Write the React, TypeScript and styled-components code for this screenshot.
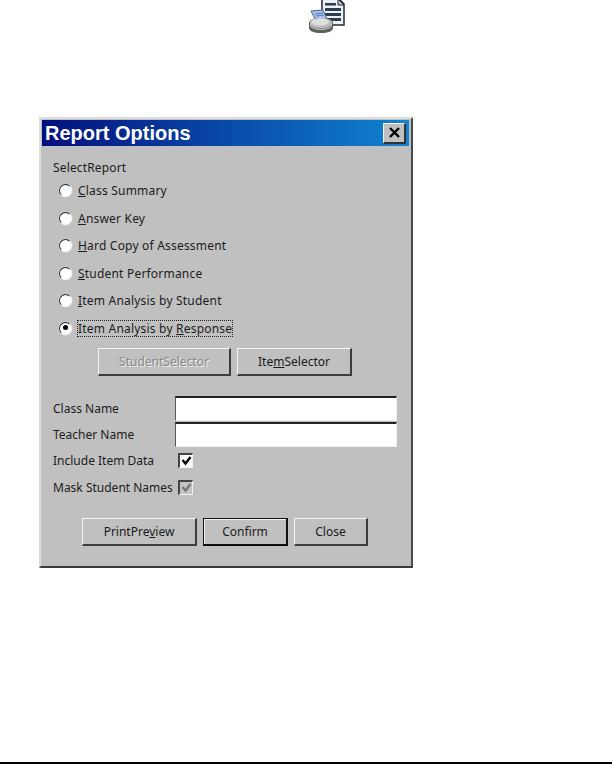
import * as React from "react";
import styled, { createGlobalStyle } from "styled-components";

const GlobalStyle = createGlobalStyle`
  html, body {
    margin: 0;
    padding: 0;
    background: #fff;
  }
`;

const Page = styled.div`
  position: relative;
  height: 764px;
  box-sizing: border-box;
  display: flex;
  flex-direction: column;
  border-bottom: 2px solid #000;
  font-family: "Noto Sans", "DejaVu Sans", sans-serif;
  font-size: 12px;
  color: #1c1c1c;
`;

const IconRow = styled.div`
  height: 34px;
  padding-left: 308px;
  margin-bottom: 83px;
`;

const Window = styled.div`
  width: 374px;
  height: 451px;
  margin-left: 39px;
  box-sizing: border-box;
  background: #c0c0c0;
  border-style: solid;
  border-width: 2px;
  border-color: #dcdcdc #4a4a4a #3a3a3a #dcdcdc;
  padding: 1px 2px 0 1px;
`;

const TitleBar = styled.div`
  height: 26px;
  display: flex;
  align-items: center;
  justify-content: space-between;
  padding: 0 3px 0 3px;
  background: linear-gradient(90deg, #03107e 0%, #0a55b0 60%, #1084d0 100%);
`;

const Title = styled.span`
  font-family: "Liberation Sans", Arial, sans-serif;
  font-size: 20px;
  font-weight: 700;
  color: #fff;
`;

const CloseBox = styled.div`
  width: 23px;
  height: 21px;
  box-sizing: border-box;
  display: flex;
  align-items: center;
  justify-content: center;
  background: #c0c0c0;
  border-style: solid;
  border-width: 1px 2px 2px 1px;
  border-color: #f4f4f4 #333 #333 #f4f4f4;
`;

const Body = styled.div`
  padding: 14px 0 0 11px;
`;

const GroupLabel = styled.div`
  line-height: 16px;
  margin-bottom: 6.5px;
  letter-spacing: 0.15px;
`;

const RadioRow = styled.div`
  height: 16px;
  margin-bottom: 11.6px;
  padding-left: 6px;
  display: flex;
  align-items: center;
  gap: 6px;
`;

const RadioCircle = styled.span<{ $checked?: boolean }>`
  position: relative;
  width: 13px;
  height: 13px;
  box-sizing: border-box;
  flex: none;
  border-radius: 50%;
  background: #fff;
  border: 1.5px solid;
  border-color: #222 #f4f4f4 #f4f4f4 #222;
  box-shadow: 0 0 0 0.5px #ddd;

  &::after {
    content: "";
    display: ${(p) => (p.$checked ? "block" : "none")};
    position: absolute;
    left: 2.5px;
    top: 2.5px;
    width: 5px;
    height: 5px;
    border-radius: 50%;
    background: #000;
  }
`;

const RadioText = styled.span<{ $focused?: boolean }>`
  line-height: 15px;
  letter-spacing: 0.2px;
  outline: ${(p) => (p.$focused ? "1px dotted #222" : "none")};
`;

const SelectorRow = styled.div`
  display: flex;
  gap: 6px;
  margin: 0 0 20px 45px;
`;

const Button = styled.div<{ $w: number; $disabled?: boolean; $default?: boolean }>`
  width: ${(p) => p.$w}px;
  height: 28px;
  box-sizing: border-box;
  display: flex;
  align-items: center;
  justify-content: center;
  background: #c0c0c0;
  border-style: solid;
  border-width: 1px 2px 2px 1px;
  border-color: ${(p) =>
    p.$default ? "#111" : "#f4f4f4 #3c3c3c #3c3c3c #f4f4f4"};
  box-shadow: ${(p) => (p.$default ? "inset 1px 1px 0 #f4f4f4" : "none")};
  color: ${(p) => (p.$disabled ? "#8a8a8a" : "#1c1c1c")};
  text-shadow: ${(p) => (p.$disabled ? "1px 1px 0 #f0f0f0" : "none")};
`;

const FieldRow = styled.div`
  height: 24px;
  margin-bottom: 2px;
  display: flex;
  align-items: center;
`;

const FieldLabel = styled.span`
  width: 122px;
  flex: none;
`;

const TextInput = styled.div`
  width: 222px;
  height: 25px;
  box-sizing: border-box;
  background: #fff;
  border-style: solid;
  border-width: 2px 1px 1px 1px;
  border-color: #222 #eee #eee #555;
`;

const CheckRow = styled.div<{ $first?: boolean }>`
  height: 16px;
  margin-top: ${(p) => (p.$first ? "6px" : "11px")};
  display: flex;
  align-items: center;
`;

const CheckBox = styled.span<{ $disabled?: boolean }>`
  width: 15px;
  height: 15px;
  box-sizing: border-box;
  flex: none;
  margin-left: 3px;
  display: flex;
  align-items: center;
  justify-content: center;
  background: ${(p) => (p.$disabled ? "#c4c4c4" : "#fff")};
  border-style: solid;
  border-width: 2px 1px 1px 2px;
  border-color: #444 #f2f2f2 #f2f2f2 #444;
  color: ${(p) => (p.$disabled ? "#777" : "#000")};
`;

const ActionRow = styled.div`
  display: flex;
  gap: 6px;
  margin: 23px 0 0 29px;
`;

const FooterSpacer = styled.div`
  flex: 1;
`;

function ReportIcon() {
  return (
    <svg width="38" height="34" viewBox="0 0 38 34">
      <path d="M14 -1h17l5 5v21H14z" fill="#eef1f6" stroke="#222a36" strokeWidth="1.5" />
      <path d="M30 -1v6h6z" fill="#bfc4cc" stroke="#222a36" />
      <path d="M17 3h11v2.500H17zM17 8h16v3H17zM17 13h16v3H17zM17 18h16v3H17z" fill="#2f3d52" />
      <path d="M3 11l12-1 4 9H7z" fill="#a6c2ee" stroke="#4a628e" />
      <path d="M7 14l8-1M8 16l8-1" stroke="#5d7bb0" />
      <path d="M1 23c0-3 5-5 12-5s12 2 12 5v5c0 3-5 5-12 5s-12-2-12-5z" fill="#5f5f5f" />
      <path d="M2 22.500c0-2.500 5-4.500 11-4.500s11 2 11 4.500v3c0 2.500-5 4.500-11 4.500s-11-2-11-4.500z" fill="#bdbdbd" />
      <ellipse cx="12" cy="22" rx="9" ry="3.500" fill="#dedede" />
      <path d="M3 26c3 2 6 2.500 10 2.500s7-.5 10-2.500" fill="none" stroke="#8a8a8a" />
    </svg>
  );
}

const reportOptions: { before: string; key: string; after: string; checked?: boolean }[] = [
  { before: "", key: "C", after: "lass Summary" },
  { before: "", key: "A", after: "nswer Key" },
  { before: "", key: "H", after: "ard Copy of Assessment" },
  { before: "", key: "S", after: "tudent Performance" },
  { before: "", key: "I", after: "tem Analysis by Student" },
  { before: "Item Analysis by ", key: "R", after: "esponse", checked: true },
];

export default function App() {
  return (
    <Page>
      <GlobalStyle />
      <IconRow>
        <ReportIcon />
      </IconRow>
      <Window>
        <TitleBar>
          <Title>Report Options</Title>
          <CloseBox>
            <svg width="11" height="11" viewBox="0 0 11 11">
              <path d="M1 1l9 9M10 1l-9 9" stroke="#000" strokeWidth="2.4" />
            </svg>
          </CloseBox>
        </TitleBar>
        <Body>
          <GroupLabel>SelectReport</GroupLabel>
          {reportOptions.map((o) => (
            <RadioRow key={o.before + o.key + o.after}>
              <RadioCircle $checked={o.checked} />
              <RadioText $focused={o.checked}>
                {o.before}
                <u>{o.key}</u>
                {o.after}
              </RadioText>
            </RadioRow>
          ))}
          <SelectorRow>
            <Button $w={133} $disabled>
              StudentSelector
            </Button>
            <Button $w={115}>
              <span>
                Ite<u>m</u>Selector
              </span>
            </Button>
          </SelectorRow>
          <FieldRow>
            <FieldLabel>Class Name</FieldLabel>
            <TextInput />
          </FieldRow>
          <FieldRow>
            <FieldLabel>Teacher Name</FieldLabel>
            <TextInput />
          </FieldRow>
          <CheckRow $first>
            <FieldLabel>Include Item Data</FieldLabel>
            <CheckBox>
              <svg width="11" height="11" viewBox="0 0 11 11">
                <path d="M1.500 5l3 3.500L9.500 2" fill="none" stroke="currentColor" strokeWidth="2.4" />
              </svg>
            </CheckBox>
          </CheckRow>
          <CheckRow>
            <FieldLabel>Mask Student Names</FieldLabel>
            <CheckBox $disabled>
              <svg width="11" height="11" viewBox="0 0 11 11">
                <path d="M1.500 5l3 3.500L9.500 2" fill="none" stroke="currentColor" strokeWidth="2.4" />
              </svg>
            </CheckBox>
          </CheckRow>
          <ActionRow>
            <Button $w={115}>
              <span>
                PrintPre<u>v</u>iew
              </span>
            </Button>
            <Button $w={85} $default>
              Confirm
            </Button>
            <Button $w={74}>Close</Button>
          </ActionRow>
        </Body>
      </Window>
      <FooterSpacer />
    </Page>
  );
}
